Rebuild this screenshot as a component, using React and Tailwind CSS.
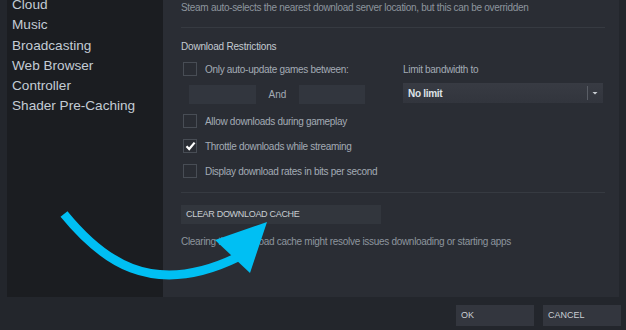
import React from 'react';

const font = { fontFamily: '"Liberation Sans", Arial, sans-serif' };

const Checkbox = ({ checked, label }) => (
  <div className="flex items-center h-[14px]">
    <div className="w-[14px] h-[14px] border border-[#484d55] flex items-center justify-center shrink-0">
      {checked && (
        <svg width="11" height="10" viewBox="0 0 11 10">
          <path d="M1.5 5.2 L4.2 8 L9.6 1.6" fill="none" stroke="#ffffff" strokeWidth="2.2" />
        </svg>
      )}
    </div>
    <span className="ml-[8px] text-[10px] tracking-[-0.3px] text-[#a3abb4]">{label}</span>
  </div>
);

const App = () => {
  const sections = ['Cloud', 'Music', 'Broadcasting', 'Web Browser', 'Controller', 'Shader Pre-Caching'];

  return (
    <div className="relative w-[626px] h-[330px] bg-[#23262c] overflow-hidden flex flex-col" style={font}>
      <div className="flex h-[297px] px-[7px]">
        <div className="w-[156px] bg-[#1b1d21] overflow-hidden">
          <div className="-mt-[5px] pl-[5px]">
            {sections.map(s => (
              <div key={s} className="text-[13.6px] leading-[20.3px] text-[#c3ccd5]">{s}</div>
            ))}
          </div>
        </div>
        <div className="flex-1 bg-[#2a2d34] pl-[18px] pr-[14px] overflow-hidden">
          <div className="text-[10px] tracking-[-0.3px] leading-[14px] text-[#8d959e] mt-[1px]">
            Steam auto-selects the nearest download server location, but this can be overridden
          </div>
          <div className="h-px bg-[#363a41] mt-[12px]" />
          <div className="text-[10px] tracking-[-0.2px] text-[#c4cbd2] mt-[12px] leading-[14px]">Download Restrictions</div>
          <div className="flex mt-[8px]">
            <div className="w-[222px]">
              <div className="pl-[2px]">
                <Checkbox label="Only auto-update games between:" />
              </div>
              <div className="flex items-center mt-[9px] pl-[8px]">
                <div className="w-[67px] h-[19px] bg-[#32363e]" />
                <span className="w-[43px] text-center text-[10px] text-[#a3abb4]">And</span>
                <div className="w-[66px] h-[19px] bg-[#32363e]" />
              </div>
            </div>
            <div className="w-[200px]">
              <div className="text-[10px] tracking-[-0.3px] text-[#a3abb4] leading-[14px] mt-[1px]">Limit bandwidth to</div>
              <div className="mt-[6px] h-[20px] bg-gradient-to-b from-[#383b43] to-[#32353d] flex items-center">
                <span className="flex-1 pl-[5px] text-[10px] tracking-[-0.3px] font-bold text-[#dfe3e7]">No limit</span>
                <div className="w-px h-[14px] bg-[#5a5e66]" />
                <svg width="15" height="20" viewBox="0 0 15 20">
                  <path d="M4.5 9 L9.5 9 L7 11.5 Z" fill="#c9cdd2" />
                </svg>
              </div>
            </div>
          </div>
          <div className="flex flex-col gap-[11px] mt-[10px] pl-[2px]">
            <Checkbox label="Allow downloads during gameplay" />
            <Checkbox checked label="Throttle downloads while streaming" />
            <Checkbox label="Display download rates in bits per second" />
          </div>
          <div className="h-px bg-[#363a41] mt-[14px]" />
          <div className="mt-[12px] w-[200px] h-[19px] bg-[#32363d] flex items-center pl-[5px] text-[9px] tracking-[-0.3px] text-[#c9ced3]">
            CLEAR DOWNLOAD CACHE
          </div>
          <div className="text-[10px] tracking-[-0.3px] text-[#8d959e] mt-[11px] leading-[14px]">
            Clearing the download cache might resolve issues downloading or starting apps
          </div>
        </div>
      </div>
      <div className="flex justify-end gap-[9px] pr-[5px] pt-[8px]">
        <div className="w-[78px] h-[21px] bg-[#33363e] flex items-center pl-[5px] text-[9px] text-[#c9ced3]">OK</div>
        <div className="w-[78px] h-[21px] bg-[#33363e] flex items-center pl-[5px] text-[9px] text-[#c9ced3]">CANCEL</div>
      </div>
      <svg className="absolute left-0 top-0 pointer-events-none" width="626" height="330" viewBox="0 0 626 330">
        <path d="M64 214 C 100 258, 150 300, 238 257" fill="none" stroke="#00bff3" strokeWidth="9" />
        <path d="M267 222 L215 240 L250 273 Z" fill="#00bff3" />
      </svg>
    </div>
  );
};

export default App;
